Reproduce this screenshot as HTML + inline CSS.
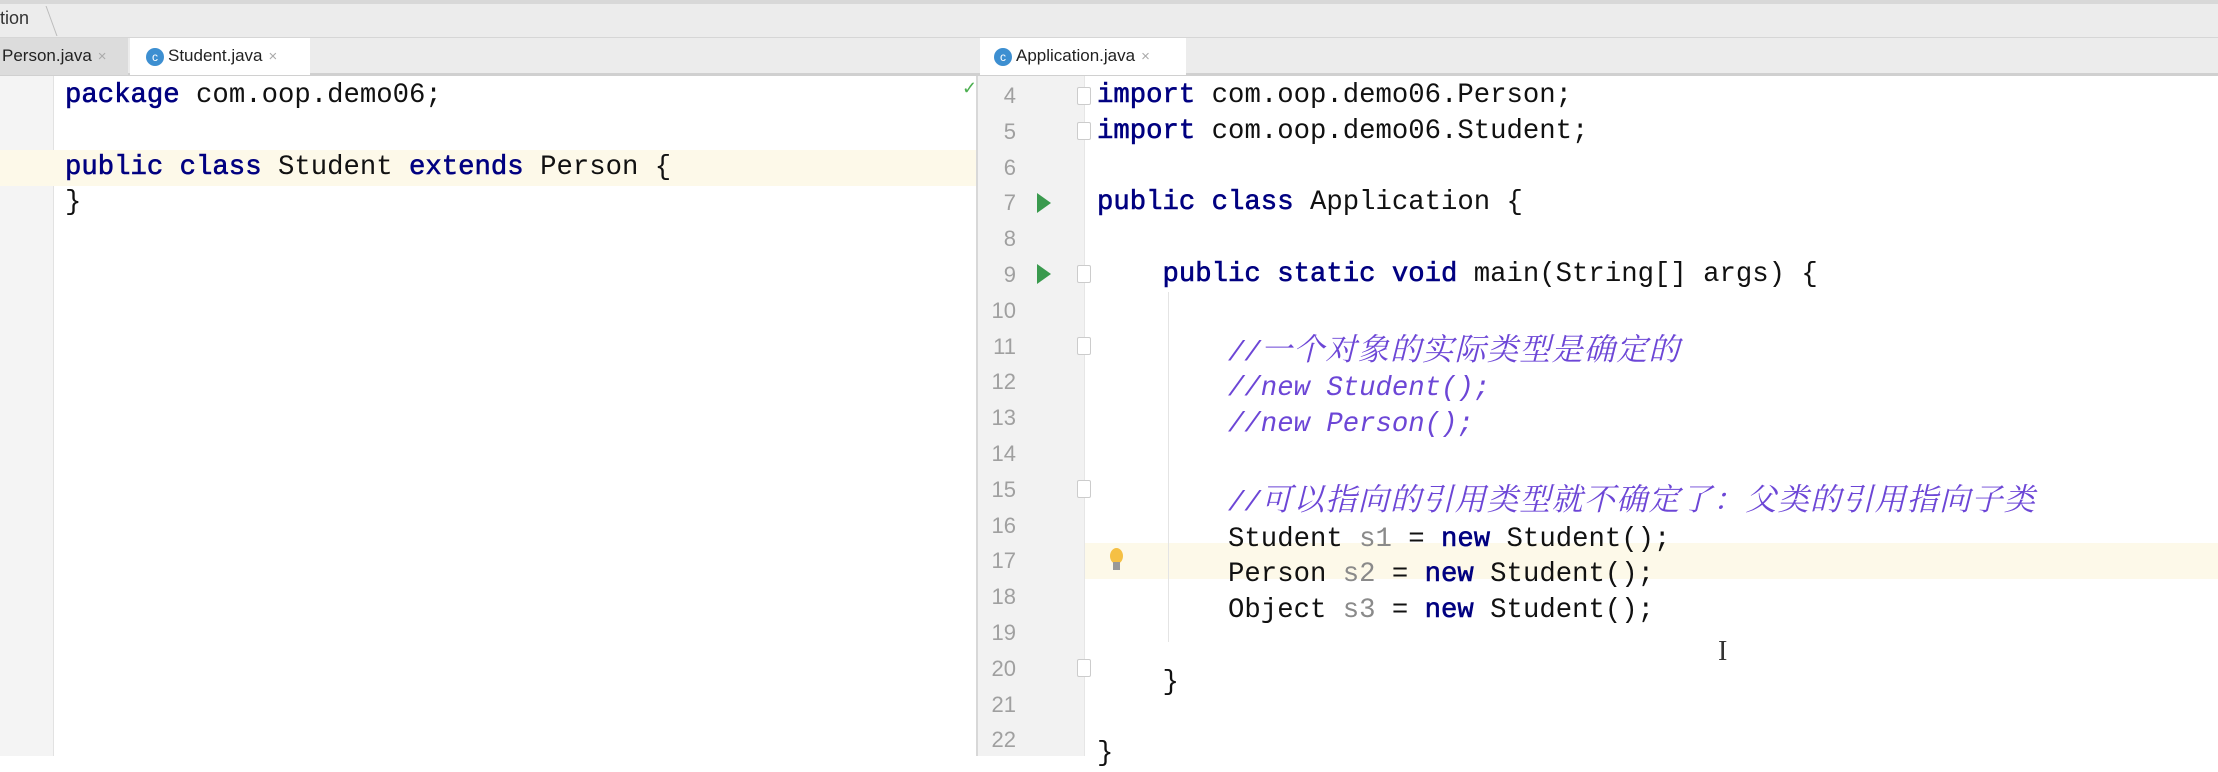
<!DOCTYPE html>
<html><head><meta charset="utf-8"><style>
*{margin:0;padding:0;box-sizing:border-box}
body{width:2218px;height:756px;overflow:hidden;background:#fff;position:relative;font-family:"Liberation Sans",sans-serif}
.abs{position:absolute}
.code{font-family:"Liberation Mono","Noto Sans CJK SC",monospace;font-size:27.3px;line-height:35.8px;white-space:pre;color:#111}
.k{color:#000080;font-weight:normal;-webkit-text-stroke:0.6px #000080}
.v{color:#8a8a8a}
.c{color:#6c46d6;font-style:italic;font-family:"Liberation Mono","Noto Serif CJK SC",serif}
.cj{font-size:31px;letter-spacing:1.3px;font-family:"Noto Serif CJK SC",serif}
.ln{font-family:"Liberation Sans",sans-serif;font-size:22px;color:#a0a0a0;line-height:35.8px;text-align:right;width:30px}
.tab{font-size:17px;color:#222;line-height:36px;height:37px}
.ic{display:inline-block;width:18px;height:18px;border-radius:50%;background:#3d8fd1;color:#fff;font-size:12px;line-height:18px;text-align:center;vertical-align:middle;margin-right:4px}
.x{color:#aaa;font-size:15px;margin-left:6px}
.run{width:0;height:0;border-top:10px solid transparent;border-bottom:10px solid transparent;border-left:14px solid #3a9a4e}
.fold{width:14px;height:18px;border:1px solid #ccc;border-radius:2px;background:#fff}
</style></head><body>
<div class="abs" style="left:0;top:0;width:2218px;height:4px;background:#d8d8d8"></div>
<div class="abs" style="left:0;top:4px;width:2218px;height:34px;background:#ececec;border-bottom:1px solid #d6d6d6"></div>
<div class="abs" style="left:0;top:8px;font-size:18px;color:#333">tion</div>
<div class="abs" style="left:40px;top:6px;width:12px;height:30px;border-right:1px solid #bbb;transform:skewX(20deg)"></div>
<div class="abs" style="left:0;top:38px;width:2218px;height:38px;background:#ececec;border-bottom:3px solid #d0d0d0"></div>
<div class="abs tab" style="left:0;top:38px;width:128px;background:#dcdcdc;padding-left:2px">Person.java<span class="x">×</span></div>
<div class="abs tab" style="left:130px;top:38px;width:180px;background:#fff;padding-left:16px"><span class="ic">c</span>Student.java<span class="x">×</span></div>
<div class="abs tab" style="left:980px;top:38px;width:206px;background:#fff;padding-left:14px"><span class="ic">c</span>Application.java<span class="x">×</span></div>
<div class="abs" style="left:0;top:76px;width:54px;height:680px;background:#f4f4f4;border-right:1px solid #e2e2e2"></div>
<div class="abs" style="left:0;top:150px;width:976px;height:36px;background:#fdf9e9"></div>
<div class="abs" style="left:962px;top:78px;color:#4caf50;font-size:18px">✓</div>
<div class="abs code" style="left:65px;top:78px"><span class="k">package</span> com.oop.demo06;

<span class="k">public class</span> Student <span class="k">extends</span> Person {
}</div>
<div class="abs" style="left:976px;top:76px;width:2px;height:680px;background:#d8d8d8"></div>
<div class="abs" style="left:978px;top:76px;width:107px;height:680px;background:#f2f2f2;border-right:1px solid #e6e6e6"></div>
<div class="abs" style="left:1085px;top:543px;width:1133px;height:36px;background:#fdf9e9"></div>
<div class="abs ln" style="left:986px;top:78px">4<br>5<br>6<br>7<br>8<br>9<br>10<br>11<br>12<br>13<br>14<br>15<br>16<br>17<br>18<br>19<br>20<br>21<br>22</div>
<div class="abs run" style="left:1037px;top:193px"></div>
<div class="abs run" style="left:1037px;top:264px"></div>
<div class="abs fold" style="left:1077px;top:87px"></div>
<div class="abs fold" style="left:1077px;top:122px"></div>
<div class="abs fold" style="left:1077px;top:265px"></div>
<div class="abs fold" style="left:1077px;top:337px"></div>
<div class="abs fold" style="left:1077px;top:480px"></div>
<div class="abs fold" style="left:1077px;top:659px"></div>
<div class="abs" style="left:1110px;top:548px;width:13px;height:16px;border-radius:50%;background:#f5c044"></div>
<div class="abs" style="left:1113px;top:562px;width:7px;height:8px;background:#999"></div>
<div class="abs" style="left:1168px;top:292px;width:1px;height:350px;background:#e4e4e4"></div>
<div class="abs code" style="left:1097px;top:78px"><span class="k">import</span> com.oop.demo06.Person;
<span class="k">import</span> com.oop.demo06.Student;

<span class="k">public class</span> Application {

    <span class="k">public static void</span> main(String[] args) {

        <span class="c">//<span class="cj">一个对象的实际类型是确定的</span></span>
        <span class="c">//new Student();</span>
        <span class="c">//new Person();</span>

        <span class="c">//<span class="cj">可以指向的引用类型就不确定了：父类的引用指向子类</span></span>
        Student <span class="v">s1</span> = <span class="k">new</span> Student();
        Person <span class="v">s2</span> = <span class="k">new</span> Student();
        Object <span class="v">s3</span> = <span class="k">new</span> Student();

    }

}</div>
<div class="abs" style="left:1718px;top:636px;font-size:28px;color:#333;font-family:'Liberation Serif',serif">I</div>
</body></html>
